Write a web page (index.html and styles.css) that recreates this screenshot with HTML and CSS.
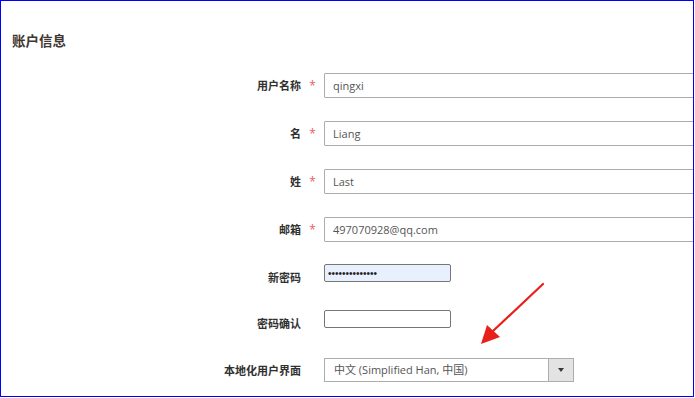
FILE: index.html
```html
<!DOCTYPE html>
<html lang="zh-CN">
<head>
    <meta charset="UTF-8">
    <title>账户信息</title>
    <link rel="stylesheet" href="styles.css">
</head>
<body>
    <div class="frame">
        <h2 class="title">账户信息</h2>

        <div class="form">
            <div class="row">
                <label class="label">用户名称</label>
                <span class="req">*</span>
                <input class="text" type="text" value="qingxi">
            </div>
            <div class="row">
                <label class="label">名</label>
                <span class="req">*</span>
                <input class="text" type="text" value="Liang">
            </div>
            <div class="row">
                <label class="label">姓</label>
                <span class="req">*</span>
                <input class="text" type="text" value="Last">
            </div>
            <div class="row">
                <label class="label">邮箱</label>
                <span class="req">*</span>
                <input class="text" type="text" value="497070928@qq.com">
            </div>
            <div class="row">
                <label class="label">新密码</label>
                <span class="req"></span>
                <input class="small filled" type="password" value="qingxi12345678">
            </div>
            <div class="row tight">
                <label class="label">密码确认</label>
                <span class="req"></span>
                <input class="small" type="password" value="">
            </div>
            <div class="row">
                <label class="label">本地化用户界面</label>
                <span class="req"></span>
                <div class="select">
                    <span class="select-value">中文 (Simplified Han, 中国)</span>
                    <span class="select-btn"><span class="caret"></span></span>
                </div>
            </div>
        </div>

        <svg class="arrow" width="80" height="80" viewBox="0 0 80 80">
            <line x1="72" y1="3" x2="22" y2="50" stroke="#e8201c" stroke-width="2.2" stroke-linecap="round"/>
            <polygon points="10,63 16,44 29,56" fill="#e8201c"/>
        </svg>
    </div>
</body>
</html>
```

FILE: styles.css
```css
body {
    margin: 0;
    background: #ffffff;
    font-family: "Open Sans", "Noto Sans CJK SC", sans-serif;
}

.frame {
    position: relative;
    width: 694px;
    height: 397px;
    box-sizing: border-box;
    border: 1px solid #0000ff;
    overflow: hidden;
    background: #ffffff;
}

.title {
    margin: 0;
    padding: 31px 0 0 11px;
    font-size: 13.5px;
    font-weight: 600;
    line-height: 18px;
    color: #41362f;
}

.form {
    display: flex;
    flex-direction: column;
    gap: 22px;
    margin-top: 22px;
}

.row {
    display: flex;
    align-items: center;
    height: 26px;
}

.row.tight {
    margin-top: -2px;
    margin-bottom: -1px;
}

.label {
    flex: none;
    width: 300px;
    text-align: right;
    font-size: 11px;
    font-weight: 600;
    color: #303030;
}

.req {
    flex: none;
    width: 23px;
    text-align: center;
    color: #e86060;
    font-size: 12px;
    line-height: 1;
    align-self: flex-start;
    margin-top: 8px;
}

.text {
    flex: none;
    width: 420px;
    height: 25px;
    box-sizing: border-box;
    border: 1px solid #adadad;
    border-radius: 1px;
    padding: 0 8px;
    font-family: inherit;
    font-size: 11px;
    color: #555555;
    background: #ffffff;
    outline: none;
}

.small {
    flex: none;
    align-self: flex-start;
    width: 127px;
    height: 18px;
    box-sizing: border-box;
    border: 1px solid #767676;
    border-radius: 2px;
    padding: 0 3px;
    font-size: 10px;
    color: #222222;
    background: #ffffff;
    outline: none;
}

.small.filled {
    background: #e8f0fe;
}

.select {
    flex: none;
    display: flex;
    width: 250px;
    height: 24px;
    box-sizing: border-box;
    border: 1px solid #adadad;
    background: #ffffff;
}

.select-value {
    flex: 1;
    padding-left: 9px;
    font-size: 11px;
    line-height: 22px;
    color: #555555;
}

.select-btn {
    width: 24px;
    display: flex;
    align-items: center;
    justify-content: center;
    border-left: 1px solid #adadad;
    background: #e3e3e3;
}

.caret {
    width: 0;
    height: 0;
    border-left: 3px solid transparent;
    border-right: 3px solid transparent;
    border-top: 4px solid #41362f;
}

.arrow {
    position: absolute;
    left: 470px;
    top: 280px;
}
```
